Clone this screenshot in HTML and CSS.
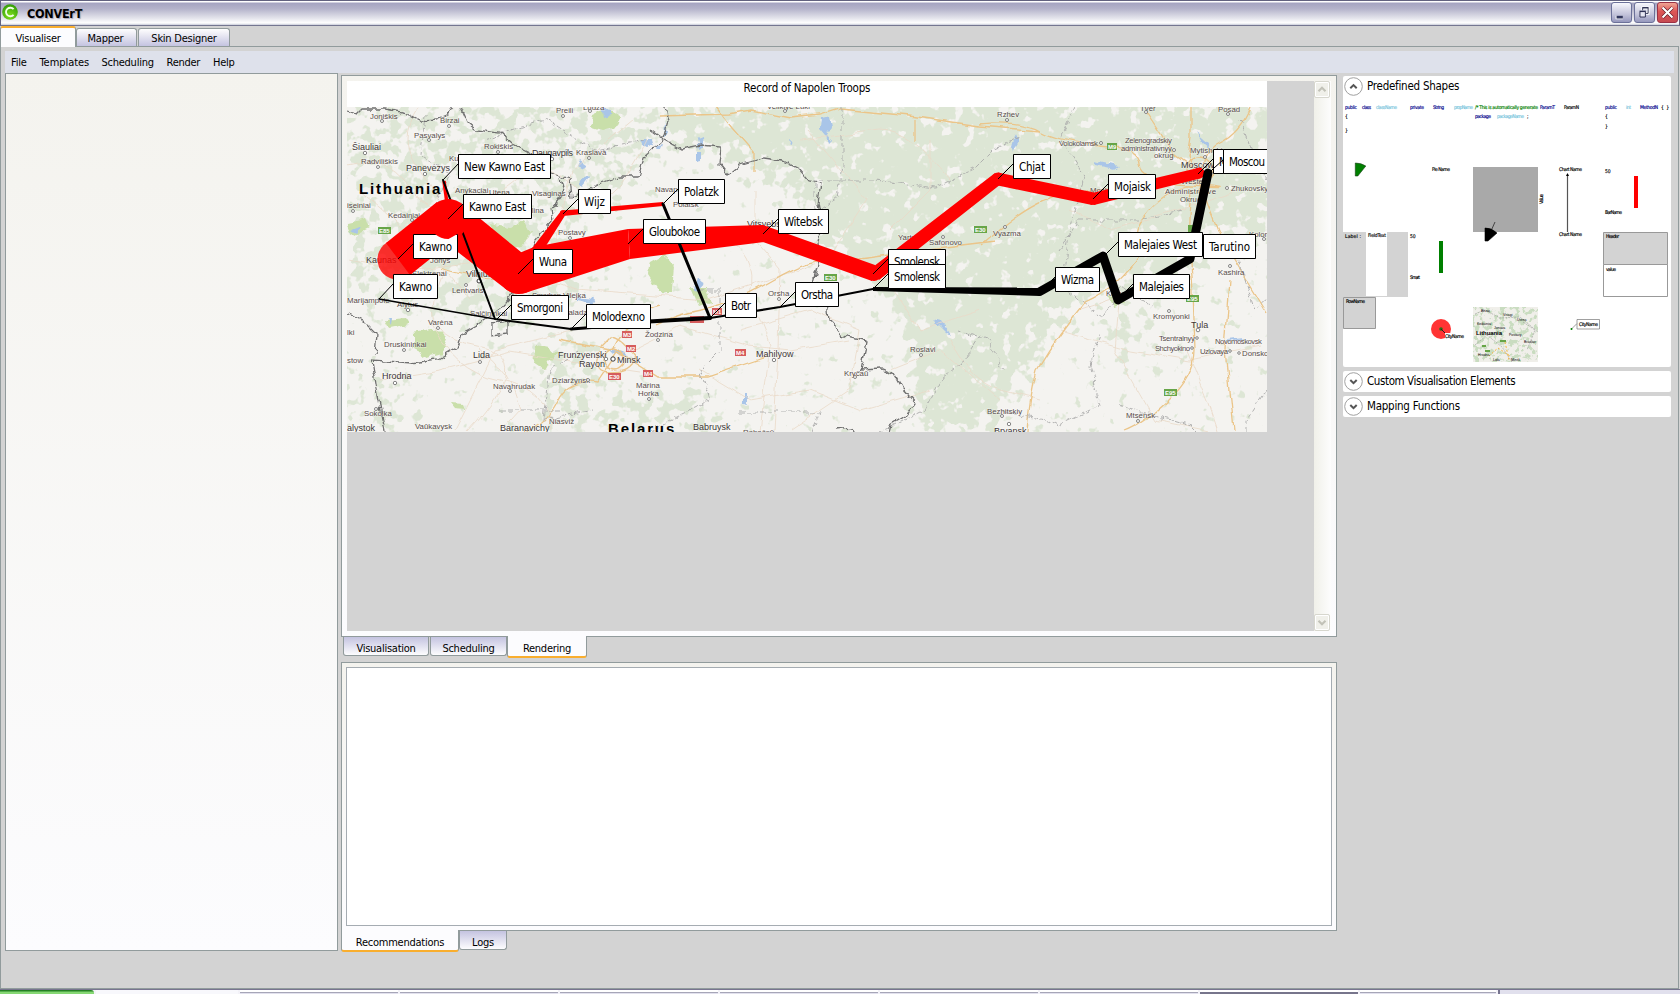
FILE: index.html
```
<!DOCTYPE html>
<html lang="en">
<head>
<meta charset="utf-8">
<title>CONVErT</title>
<link rel="stylesheet" href="styles.css">
</head>
<body>
<div class="window">
  <header class="titlebar">
    <svg class="app-icon" width="16" height="16" viewBox="0 0 16 16"><defs><radialGradient id="orb" cx=".5" cy=".75" r=".8"><stop offset="0" stop-color="#7fe01c"/><stop offset="1" stop-color="#2c9606"/></radialGradient></defs><circle cx="8" cy="8" r="7.8" fill="url(#orb)"/><path d="M11.6 5.2A4.3 4.3 0 1 0 11.6 10.8" fill="none" stroke="#f1ffe6" stroke-width="1.9"/></svg>
    <h1 class="app-title">CONVErT</h1>
    <div class="win-buttons">
      <svg class="win-btn" viewBox="0 0 21 21"><path d="M4 14h8v4H4z" fill="#fff"/><path d="M5 14h7v3H5z" fill="#33385f"/></svg>
      <svg class="win-btn" viewBox="0 0 21 21"><path d="M8.5 8V5.5h6v6H12" fill="none" stroke="#fff" stroke-width="3"/><path d="M8.5 8V5.5h6v6H12M8 5h7" fill="none" stroke="#22264a"/><path d="M5.500 9.500h6v6h-6zM5 9h7" fill="#e8e8f4" stroke="#22264a"/></svg>
      <svg class="win-btn win-close" viewBox="0 0 21 21"><path d="M5 5l11 11M16 5L5 16" stroke="#5a1620" stroke-width="3.600"/><path d="M5 5l11 11M16 5L5 16" stroke="#fff" stroke-width="2.400"/></svg>
    </div>
  </header>
  <nav class="main-tabs">
    <span class="tab active tab-vis">Visualiser</span><span class="tab tab-map">Mapper</span><span class="tab tab-skin">Skin Designer</span>
  </nav>
  <main class="frame">
    <nav class="menu"><span class="m-file">File</span><span class="m-temp">Templates</span><span class="m-sched">Scheduling</span><span class="m-rend">Render</span><span>Help</span></nav>
    <div class="columns">
      <aside class="left-panel"></aside>
      <section class="center">
        <div class="viewer">
          <div class="canvas">
            <svg class="map" width="920" height="351" viewBox="347 81 920 351">
              <defs>
                <filter id="woods" filterUnits="userSpaceOnUse" x="347" y="107" width="920" height="325" color-interpolation-filters="sRGB">
                  <feGaussianBlur in="SourceAlpha" stdDeviation="11" result="density"/>
                  <feTurbulence type="fractalNoise" baseFrequency=".085" numOctaves="3" seed="7" result="noise"/>
                  <feComposite in="noise" in2="density" operator="arithmetic" k1="0" k2="1" k3=".38" k4="-.32" result="sum"/>
                  <feComponentTransfer in="sum" result="mask"><feFuncA type="linear" slope="12" intercept="-4.300"/></feComponentTransfer>
                  <feFlood flood-color="#dde6d5"/><feComposite in2="mask" operator="in"/>
                </filter>
                <filter id="rough" filterUnits="userSpaceOnUse" x="340" y="100" width="940" height="340">
                  <feTurbulence type="fractalNoise" baseFrequency=".11" numOctaves="2" seed="3"/>
                  <feDisplacementMap in="SourceGraphic" scale="8" xChannelSelector="R" yChannelSelector="G"/>
                </filter>
                <filter id="soft" filterUnits="userSpaceOnUse" x="340" y="100" width="940" height="340">
                  <feTurbulence type="fractalNoise" baseFrequency=".05" numOctaves="2" seed="9"/>
                  <feDisplacementMap in="SourceGraphic" scale="7" xChannelSelector="R" yChannelSelector="G"/>
                </filter>
                <clipPath id="area"><path d="M347 107h920v325H347z"/></clipPath>
              </defs>
              <path d="M347 81h920v26H347z" fill="#fff"/>
              <text class="caption" x="743.500" y="92" textLength="127">Record of Napolen Troops</text>
              <g clip-path="url(#area)">
                <path d="M347 107h920v325H347z" fill="#f4f3f0"/>
                <g filter="url(#woods)">
                  <path fill="#000" d="M660 100H1270V215L1200 250 1160 290 1110 280 1050 330 985 432H920L905 330 860 260 815 240 800 190 730 160 660 130z"/>
                  <path fill="#000" fill-opacity=".55" d="M347 100H660V160L560 240 600 290 550 330 480 330 350 300zM347 380h60v52h-60zM540 340h60v92h-60zM1110 300h40v60h-40zM580 390h140v42H580zM1230 160h40v100h-40z"/>
                </g>
                <g fill="#c9dfaa" filter="url(#rough)">
                  <path d="M592 115l14-6 14 8-4 10-14 4-12-4zM490 224l20 4 12-8 8 14-10 14-24-6zM536 345l14 3 7 6-8 8-4 8-12-8zM650 262l14-8 10 12-2 26-12 0-12-18zM690 288l16 0 4 14-12 4zM412 333l26-4 10 10-6 14-14 4-16-8zM385 320l20-2 4 6-20 4zM450 403l14 1 2 5-12-1zM1108 296l14-3 3 10-12 4zM348 222l18-4 4 10-16 8z"/>
                </g>
                <g fill="#a9c5e8" filter="url(#rough)">
                  <path d="M601 108l10 2 0 6-8 2zM641 139l10 0 2 6-8 3zM580 161l6 4-3 5-6-3zM697 138l5-2 1 12-4 2zM821 118l10-2 2 10-8 10-5-6zM825 130l6 10-3 3zM665 122l3 8-4 8zM655 146l8-2-2 6zM578 182l10-7 2 2-7 9zM697 152l4 0 0 8-4 1zM575 297l20 2-3 5-16-3zM608 346l16 6 4 6-14-6zM698 278l6 4-5 10-4-3zM934 320l8 2 8 12-4-2zM744 394l2 0 0 12-2-1zM1093 160l26 6-4 3-20-4zM1196 132l12 10 3 8-9-8zM1016 134l3 8-6 10-1-4zM352 230l10-4-5 7zM388 318l4 0-1 6zM566 150l4 3-3 4zM788 140l5 1-2 4zM1226 340l18-2-3 3-15 2z"/>
                </g>
                <g class="minor" filter="url(#soft)">
                  <path d="M347 165q40-10 60 20t50 25 60-30 60 10 70-50M418 107q-20 30 0 60t30 50-10 70 40 60-10 85M347 260l60 10 90-10 80 30 130 10 120-40 40-60-60-70M430 320q20 50 70 60t50 50M380 380l60-10 70-18 60 10 70 10M480 350q30 20 40 60l-20 22M720 235q40 20 30 60l20 50-10 87M740 330l70-20 50 20-10 60-60 40M755 190v50l25 30-2 80-4 82M850 340l-60 10-40-4-70-20-60 30M700 370l50 30 60-10 50 20 70-20M950 340q20 40 50 50l40 10M880 270l40 60 60-20M1120 290l-5 60 40 70 60 12M1060 330l70 20 60 10 70-15M1188 350l20 50 10 30M1190 300l-50-10-60 20M950 180q-40-50-70-50l-80 10M930 140v50l-40 40M1240 190l-60 20-70 20-40-20M890 370l50-20 60 50M455 430l40-80 80-20M360 190l70 60 40 50M553 250l20-80 60-50"/>
                </g>
                <g class="road" filter="url(#soft)">
                  <path d="M660 116l70-2 20-4 40 8 30-3 20-6 70 7 70 10 60 5M915 119v22M717 107l15 20 22 25v20M980 124q40-4 60 7t60 14 40 20 50 20 20 0M1145 110l30 45 20 15M1191 107l0 30-3 20 12 25M1250 107q-10 25-30 35t-15 40l-8 10M1200 185l20 50 18 30 29 48M1230 280l-5 70 8 80M1190 185q-30 10-46 32t1 30q-25 40-60 55-25 30-48 68-8 30-10 62M1192 190q-5 50 0 100l2 60q0 25-26 50t-45 32M980 246q50-45 80-50l100-15M835 262q40-5 60-8l100-12M655 325q25-12 50-16t70-30 60-15M525 432q20-5 32-30t40-20l20-30 40 25 50 0q30-10 60-20M600 352q-10 20 10 20t25-15q-15-20-25-20l-10 10M440 268q30 10 70 12M559 340l50 10M1195 255q10-60 5-80M613 350q20-40 46-45"/>
                  <circle cx="1199" cy="170" r="13"/><circle cx="614" cy="359" r="10"/>
                </g>
                <g class="province" filter="url(#rough)">
                  <path d="M425 115l-4 40 30 20-20 40 30 20M485 140l60-20 50 30 50-10M842 107v60l-5 30-20 15M815 210l0-30 60 0 60 8 40-20 20-20 25-10M1075 107l-15 30 25 40-15 50-8 60 40 30 20-30 30 20M1060 250l20-30 60 0 40-10M1240 120l15 40 12 20M1230 240l15 40 10 30 12-10M1267 390l-20 30 0 12M700 290l20 0 0 60-20 20 10 30-60 30M980 335l-15 25-25 20-15 30-60 30M958 330l30 10 15 30M580 350l-30 20-6 50 50-10M500 410l60 0M1100 335l-10 30 10 40-40 20-60-15M1120 405l70 20 10 10M740 412l80 0-8 20"/>
                </g>
                <g class="border" filter="url(#rough)">
                  <path d="M347 110l10 3 4-4 25 0 20 4 15 8 15-1 10-4 6-9M461 107l7 16 8 7 24 3 12 11 20 10 18 19 20 6 2 18 24-12 22-8 20 0 6-20 18-16 6-20-4-20 4-6M650 130l14 10 17 9 20-4 20 2-2 18 8 10 12-10 24-7 20 3 16 8 10 12 12 2-3 20 4 20-4 20 2 18-6 20 12 14M560 178l4 14-13 18 2 10-17 20-5 16-20 12 2 26-12 14-10 8-14 10-15 8-4 13-20 12-26 4-40-3 5 30 8 40 6 14 4 18M347 312l16 8 14 14-2 20M827 300l2 20 14 16 24 6-6 28 20-1 14 6 8 14 12 14-8 12-16 10-3 12M836 430l15-2 10 5"/>
                  <path d="M493 322l14-2 0 14-14 2z"/>
                </g>
                <g class="towns">
                  <text x="370" y="119">Joniškis</text><text x="440" y="123">Birzai</text><text x="414" y="138">Pasvalys</text><text class="city" x="352" y="150">Šiauliai</text><text x="361" y="164">Radviliškis</text><text class="city" x="406" y="171">Panevezys</text><text x="484" y="149">Rokiškis</text><text class="city" x="532" y="156" textLength="41">Daugavpils</text><text x="576" y="155">Kraslava</text><text x="556" y="113">Preili</text><text x="583" y="110">Ludza</text><text x="449" y="161">Kupiškis</text><text x="455" y="193">Anykaciai</text><text x="489" y="195">Utena</text><text x="532" y="196">Visaginas</text><text x="347" y="208">iseiniai</text><text x="388" y="218">Kedainiai</text><text x="558" y="235">Postavy</text><text x="655" y="192">Navapolatsk</text><text x="530" y="213">ilina</text>
                  <text class="city" x="366" y="263">Kaunas</text><text class="city" x="466" y="277">Vilnius</text><text x="412" y="276">Elektrenai</text><text x="430" y="263">Jonys</text><text x="452" y="293">Lentvaris</text><text x="347" y="303">Marijampole</text><text x="397" y="307">Alytus</text><text x="470" y="316">Salčininkai</text><text x="532" y="298" textLength="29">Smarhon</text><text x="563" y="298">Vilejka</text><text x="562" y="315">Maladzyechna</text><text x="428" y="325">Varėna</text><text x="384" y="347">Druskininkai</text><text x="347" y="335">lki</text><text x="347" y="363">stow</text><text class="city" x="473" y="358">Lida</text><text class="city" x="382" y="379">Hrodna</text><text x="493" y="389">Navahrudak</text><text x="364" y="416">Sokolka</text><text class="city" x="347" y="431">alystok</text><text x="415" y="429">Vaŭkavysk</text><text class="city" x="500" y="431">Baranavichy</text><text x="549" y="424">Niasviž</text><text class="city" x="558" y="358">Frunzyenski</text><text class="city" x="579" y="367">Rayon</text><text class="city" x="617" y="363">Minsk</text><text x="552" y="383">Dziaržynsk</text><text x="636" y="388">Marina</text><text x="638" y="396">Horka</text><text x="645" y="337">Žodzina</text>
                  <text x="767" y="109">Velikiye Luki</text><text x="673" y="207">Polatsk</text><text class="city" x="747" y="227">Vitsyebsk</text><text x="929" y="245">Safonovo</text><text x="898" y="240">Yartsevo</text><text x="768" y="296">Orsha</text><text class="city" x="756" y="357">Mahilyow</text><text x="844" y="376">Kryčaŭ</text><text x="910" y="352">Roslavl</text><text class="city" x="693" y="430">Babruysk</text><text x="743" y="435">Rahačoŭ</text>
                  <text x="997" y="117">Rzhev</text><text x="1140" y="111">Tver</text><text x="1218" y="112">Posad</text><text x="1059" y="146" textLength="39">Volokolamsk</text><text x="1125" y="143" textLength="47">Zelenogradskiy</text><text x="1121" y="151" textLength="51">administrativnyy</text><text x="1154" y="158">okrug</text><text x="1190" y="153">Mytishchi</text><text class="city" x="1181" y="168">Moscow</text><text x="1181" y="184">Western</text><text x="1165" y="194" textLength="51">Administrative</text><text x="1180" y="202">Okrug</text><text x="1231" y="191">Zhukovsky</text><text x="1090" y="193">Mozhaysk</text><text x="993" y="236">Vyazma</text><text x="1249" y="237">Kolomna</text><text x="1106" y="296">Kaluga</text>
                  <text x="1218" y="275">Kashira</text><text x="1153" y="319">Kromyonki</text><text class="city" x="1191" y="328">Tula</text><text x="1159" y="341" textLength="36">Tsentralnyy</text><text x="1155" y="351" textLength="35">Shchyokino</text><text x="1215" y="344" textLength="47">Novomoskovsk</text><text x="1200" y="354" textLength="28">Uzlovaya</text><text x="1242" y="356">Donskoy</text><text x="1126" y="418">Mtsensk</text><text x="987" y="414">Bezhitskiy</text><text class="city" x="994" y="434">Bryansk</text>
                </g>
                <g fill="#fff" stroke="#777" stroke-width=".9">
                  <circle cx="382" cy="121" r="1.500"/><circle cx="449" cy="126" r="1.500"/><circle cx="429" cy="140" r="1.500"/><circle cx="365" cy="153" r="1.700"/><circle cx="425" cy="174" r="1.700"/><circle cx="378" cy="167" r="1.500"/><circle cx="563" cy="116" r="1.500"/><circle cx="590" cy="111" r="1.500"/><circle cx="498" cy="152" r="1.500"/><circle cx="552" cy="159" r="1.700"/><circle cx="589" cy="158" r="1.500"/><circle cx="353" cy="211" r="1.500"/><circle cx="412" cy="220" r="1.500"/><circle cx="570" cy="238" r="1.500"/><circle cx="479" cy="281" r="2" stroke="#222"/><circle cx="466" cy="285" r="1.500"/><circle cx="408" cy="310" r="1.700"/><circle cx="438" cy="328" r="1.500"/><circle cx="404" cy="350" r="1.500"/><circle cx="480" cy="362" r="1.500"/><circle cx="395" cy="383" r="1.700"/><circle cx="510" cy="391" r="1.500"/><circle cx="376" cy="409" r="1.500"/><circle cx="606" cy="359" r="1.700"/><circle cx="613" cy="359" r="2.200" stroke="#222"/><circle cx="588" cy="380" r="1.500"/><circle cx="649" cy="399" r="1.500"/><circle cx="658" cy="340" r="1.500"/><circle cx="785" cy="111" r="1.500"/><circle cx="779" cy="299" r="1.500"/><circle cx="774" cy="360" r="1.700"/><circle cx="855" cy="377" r="1.500"/><circle cx="921" cy="355" r="1.500"/><circle cx="943" cy="237" r="1.500"/><circle cx="1007" cy="120" r="1.500"/><circle cx="1146" cy="112" r="1.500"/><circle cx="1228" cy="114" r="1.500"/><circle cx="1101" cy="143" r="1.500"/><circle cx="1174" cy="150" r="1.500"/><circle cx="1205" cy="157" r="1.500"/><circle cx="1227" cy="188" r="1.500"/><circle cx="1005" cy="227" r="1.500"/><circle cx="1264" cy="239" r="1.500"/><circle cx="1230" cy="266" r="1.500"/><circle cx="1169" cy="311" r="1.500"/><circle cx="1198" cy="330" r="1.800"/><circle cx="1197" cy="338" r="1.300"/><circle cx="1192" cy="348" r="1.300"/><circle cx="1230" cy="351" r="1.300"/><circle cx="1239" cy="353" r="1.300"/><circle cx="1138" cy="421" r="1.500"/><circle cx="1009" cy="424" r="1.700"/><circle cx="1002" cy="416" r="1.500"/>
                </g>
                <g class="country"><text x="359" y="193.500" textLength="81">Lithuania</text><text x="608" y="433.500" textLength="66">Belarus</text></g>
                <g fill="#67a548"><path d="M378 227h13v7h-13zM824 274h13v7h-13zM974 226h13v7h-13zM1107 143h10v7h-10zM1186 295h13v7h-13zM1164 389h13v7h-13zM1188 225h8v7h-8z"/></g>
                <g fill="#d65c5c"><path d="M622 331h10v7h-10zM626 345h10v7h-10zM643 370h10v7h-10zM608 373h13v7h-13zM735 349h11v7h-11zM712 308h10v7h-10zM690 316h14v7h-14z"/></g>
                <g class="shields"><text x="379" y="233">E85</text><text x="825" y="280">E30</text><text x="975" y="232">E30</text><text x="1108" y="149">M9</text><text x="1187" y="301">E95</text><text x="1165" y="395">E95</text><text x="623" y="337">M3</text><text x="627" y="351">M2</text><text x="644" y="376">M4</text><text x="609" y="379">E30</text><text x="736" y="355">M4</text><text x="713" y="314">M1</text></g>
                <!-- advance -->
                <g fill="#f00">
                  <circle cx="397.500" cy="259.500" r="20" opacity=".8"/>
                  <path d="M386 243L437 202 460 235 410 275z"/>
                  <path d="M461 203L521 252 537 262 519 294 507 290 437 236zM507 258L534 247 628 229 630 259 525 293z"/>
                  <path d="M628 229L763 225 764 242 630 259zM763 225L875 265 872 281 763 242zM869 270L995 173 1001 184 879 280z"/>
                  <path d="M998 172.500L1094 192.500 1092 205 998 185.500zM1092 193L1198 168 1200 178.500 1094 205z"/>
                  <circle cx="519" cy="274" r="20"/><circle cx="874" cy="274" r="7"/><circle cx="998" cy="179" r="6.500"/><circle cx="1093" cy="199" r="6"/><circle cx="1199" cy="173" r="5.500"/>
                  <path d="M515 270L561 211 566 214 527 276zM563 210.500L663 202 663 206 563 216z"/>
                  <circle cx="563" cy="213" r="3"/>
                </g>
                <path d="M444 181l4 30" stroke="#f00" stroke-width="3.500"/>
                <!-- retreat -->
                <g stroke="#000" fill="none" stroke-linecap="round">
                  <path d="M443 180L495 319M495 319L571 329" stroke-width="2"/><path d="M379 299L495 319" stroke-width="1.400"/>
                  <path d="M663 204L710 318" stroke-width="3"/><path d="M571 329L640 324" stroke-width="3"/><path d="M640 322L710 318" stroke-width="4.200"/><path d="M710 318L780 307 873 289" stroke-width="2.200"/>
                </g>
                <path d="M873 287L1040 287.500V296L873 291z"/>
                <path d="M1040 291.500L1103 256 1118 300 1190 259 1208 173" fill="none" stroke="#000" stroke-linecap="round" stroke-width="8.800" stroke-linejoin="round"/>
                <circle cx="448.500" cy="219" r="20" fill="#f00"/>
                <g class="leaders">
                  <path d="M443 180l15-16M448 219l15-15M398 259l15-15M379 299l14-15M563 214l15-15M628 244l15-15M663 204l15-15M763 234l15-15M518 274l15-15M496 320l15-15M571 329l15-15M710 318l15-15M780 307l15-15M873 274l15-15M873 289l15-15M998 179l15-15M1093 199l15-15M1198 174l15-15M1208 174l15-15M1103 257l15-15M1040 292l15-15M1118 299l15-15M1188 259l15-15"/>
                </g>
                <g class="boxes">
                  <path d="M458.500 154.500h92v24h-92zM463.500 194.500h68v24h-68zM413.500 234.500h44v24h-44zM393.500 274.500h44v24h-44zM578.500 189.500h32v24h-32zM643.500 219.500h62v24h-62zM678.500 179.500h46v24h-46zM778.500 209.500h50v24h-50zM533.500 249.500h39v24h-39zM511.500 295.500h57v24h-57zM586.500 304.500h64v24h-64zM725.500 293.500h31v24h-31zM795.500 282.500h43v24h-43zM888.500 249.500h57v24h-57zM1013.500 154.500h37v24h-37zM1108.500 174.500h47v24h-47zM1213.500 149.500h44v24h-44zM1118.500 232.500h84v24h-84zM1203.500 234.500h52v24h-52zM1055.500 267.500h44v24h-44zM1133.500 274.500h56v24h-56z"/>
                </g>
                <path d="M448.500 239A20 20 0 0 1 435 234h22.500z" fill="#f00"/>
                <g class="labels">
                  <text x="464" y="171" textLength="81">New Kawno East</text><text x="469" y="211" textLength="57">Kawno East</text><text x="419" y="251" textLength="33">Kawno</text><text x="399" y="291" textLength="33">Kawno</text><text x="584" y="206" textLength="21">Wijz</text><text x="649" y="236" textLength="51">Gloubokoe</text><text x="684" y="196" textLength="35">Polatzk</text><text x="784" y="226" textLength="39">Witebsk</text><text x="539" y="266" textLength="28">Wuna</text><text x="517" y="312" textLength="46">Smorgoni</text><text x="592" y="321" textLength="53">Molodexno</text><text x="731" y="310" textLength="20">Botr</text><text x="801" y="299" textLength="32">Orstha</text><text x="894" y="266" textLength="46">Smolensk</text><text x="1019" y="171" textLength="26">Chjat</text><text x="1114" y="191" textLength="37">Mojaisk</text><text x="1219" y="166" textLength="36">Moscou</text><text x="1124" y="249" textLength="73">Malejaies West</text><text x="1209" y="251" textLength="41">Tarutino</text><text x="1061" y="284" textLength="33">Wizma</text><text x="1139" y="291" textLength="45">Malejaies</text>
                </g>
                <g class="boxes"><path d="M888.500 264.500h57v24h-57zM1223.500 149.500h48v24h-48z"/></g>
                <path class="leaders" d="M1214 168l9-8"/>
                <g class="labels"><text x="894" y="281" textLength="46">Smolensk</text><text x="1229" y="166" textLength="36">Moscou</text></g>
              </g>
            </svg>
          </div>
          <div class="scrollbar">
            <svg class="sb-btn" viewBox="0 0 16 16"><path d="M4 10l4-4 4 4" /></svg>
            <svg class="sb-btn" viewBox="0 0 16 16"><path d="M4 6l4 4 4-4" /></svg>
          </div>
        </div>
        <nav class="bottom-tabs view-tabs"><span class="btab b-vis">Visualisation</span><span class="btab b-sch">Scheduling</span><span class="btab active b-ren">Rendering</span></nav>
        <div class="recommend"><div class="textbox"></div></div>
        <nav class="bottom-tabs"><span class="btab active b-rec">Recommendations</span><span class="btab b-log">Logs</span></nav>
      </section>
      <aside class="right">
        <section class="expander open">
          <h2 class="exp-head"><svg class="chev" viewBox="0 0 19 19"><circle cx="9.500" cy="9.500" r="8.800"/><path d="M6.300 11.300l3.200-3.200 3.200 3.200"/></svg><span class="w-pre">Predefined Shapes</span></h2>
          <svg class="shapes" width="328" height="267" viewBox="1343 100 328 267">
            <defs>
              <filter id="mini" x="0" y="0" width="1" height="1" color-interpolation-filters="sRGB"><feTurbulence type="fractalNoise" baseFrequency=".2" numOctaves="3" seed="5"/><feComponentTransfer><feFuncA type="linear" slope="9" intercept="-4.500"/></feComponentTransfer><feComposite in2="SourceGraphic" operator="in" result="m"/><feFlood flood-color="#c9dcc0"/><feComposite in2="m" operator="in" result="g"/><feMerge><feMergeNode in="SourceGraphic"/><feMergeNode in="g"/></feMerge></filter>
            </defs>
            <g class="code">
              <g fill="#00008b" stroke="#00008b"><text x="1345" y="108.500" textLength="12">public</text><text x="1362" y="108.500" textLength="9">class</text><text x="1410" y="108.500" textLength="14">private</text><text x="1433" y="108.500" textLength="11">String</text><text x="1540" y="108.500" textLength="15">ParamT</text><text x="1605" y="108.500" textLength="12">public</text><text x="1640" y="108.500" textLength="18">MethodN</text><text x="1475" y="117.500" textLength="16">package</text></g>
              <g fill="#5fb8d6" stroke="#8fd0e4"><text x="1376" y="108.500" textLength="21">className</text><text x="1454" y="108.500" textLength="19">propName</text><text x="1626" y="108.500" textLength="5">int</text><text x="1497" y="117.500" textLength="27">packageName</text></g>
              <text fill="green" stroke="green" x="1475" y="108.500" textLength="63">/* This is automatically generate</text>
              <text x="1564" y="108.500" textLength="15">ParamN</text><text x="1661" y="108.500" textLength="8">{ }</text><text x="1527" y="117.500">;</text><text x="1345" y="117.500">{</text><text x="1345" y="131.500">}</text><text x="1605" y="117.500">{</text><text x="1605" y="127.500">}</text>
            </g>
            <path d="M1355.300 163q6 0 10.500 3l-8 10h-2.500z" fill="green" stroke="#143c14" stroke-width=".6"/>
            <path d="M1473 167h65v65h-65z" fill="#a9a9a9"/><path d="M1485 228q6-.5 12 5l-9 8h-3zM1491 231l4-9" stroke="#000" stroke-width=".6"/>
            <path d="M1567.500 174v58" stroke="#555" stroke-width="1.200"/><path d="M1566 176l1.500-3 1.500 3z"/>
            <path d="M1634 176h4v32h-4z" fill="red"/>
            <path d="M1343 232h65v65h-65z" fill="#d3d3d3"/><path d="M1366 232h21v64h-21z" fill="#fff"/>
            <path d="M1439 241h4v32h-4z" fill="green"/>
            <path d="M1603.500 232.500h64v32h-64zM1343.500 297.500h32v31h-32z" fill="#d3d3d3" stroke="#999"/><path d="M1603.500 264.500h64v32h-64z" fill="#fff" stroke="#999"/>
            <circle cx="1441" cy="329" r="10" fill="#ff3434"/><circle cx="1441" cy="329" r="1.800" fill="#286e14"/><path d="M1441 329l4 4" stroke="#222"/><path d="M1445 333h18v7h-18z" fill="#fff"/>
            <path d="M1473 307h65v55h-65z" fill="#f0efea" filter="url(#mini)"/>
            <path d="M1475 314l10-4 15 8 20-1 18 15M1475 345l12-10 15 12 10 15M1523 322l12 8-8 20" fill="none" stroke="#999" stroke-width=".6" stroke-dasharray="2 1"/>
            <path d="M1500 340h6v2h-6zM1482 345h4v2h-4zM1485 350h5v2h-5z" fill="#67a548"/><path d="M1489 356l9-8 12 8M1505 342l4 18" fill="none" stroke="#f5b63e" stroke-dasharray="2 2"/>
            <path d="M1571.500 329l5.500-5.500v-4h22.500v9.500H1577v-5.500" fill="#fff" stroke="#777" stroke-width=".7"/><circle cx="1571.500" cy="329" r="1" fill="green"/>
            <g class="code">
              <text x="1432" y="171" textLength="18">Pie Name</text><text x="1559" y="171" textLength="23">Chart Name</text><text x="1559" y="236" textLength="23">Chart Name</text><text x="1605" y="173">50</text><text x="1605" y="214" textLength="17">BarName</text><text x="1345" y="238" textLength="16">Label  :</text><text x="1368" y="237" textLength="18">FieldText</text><text x="1410" y="238">50</text><text x="1410" y="279" textLength="10">Smart</text><text x="1606" y="238" textLength="13">Header</text><text x="1606" y="271" textLength="10">value</text><text x="1346" y="303" textLength="19">RowName</text><text x="1445" y="338" textLength="19">CityName</text><text x="1579" y="326" textLength="19">CityName</text><text transform="translate(1543 204) rotate(-90)" textLength="10">Value</text>
            </g>
            <g class="mini-towns">
              <text x="1481" y="312">Birzai</text><text x="1517" y="321">Utena</text><text x="1477" y="325">Kedainiai</text><text x="1494" y="329">Jonava</text><text x="1503" y="316">Visagi</text><text x="1509" y="336">Postavy</text><text x="1478" y="356">Hrodna</text><text x="1493" y="361">Lida</text><text x="1511" y="361">Minsk</text><text x="1524" y="343">Braslav</text>
              <text x="1476" y="335" class="mini-country" textLength="26">Lithuania</text>
            </g>
          </svg>
        </section>
        <section class="expander"><h2 class="exp-head"><svg class="chev" viewBox="0 0 19 19"><circle cx="9.500" cy="9.500" r="8.800"/><path d="M6.300 8l3.200 3.200L12.700 8"/></svg><span class="w-cus">Custom Visualisation Elements</span></h2></section>
        <section class="expander"><h2 class="exp-head"><svg class="chev" viewBox="0 0 19 19"><circle cx="9.500" cy="9.500" r="8.800"/><path d="M6.300 8l3.200 3.200L12.700 8"/></svg><span class="w-mapf">Mapping Functions</span></h2></section>
      </aside>
    </div>
  </main>
  <footer class="taskbar"><i class="start"></i><i class="quick"></i><i class="task"></i><i class="task"></i><i class="task"></i><i class="task"></i><i class="task"></i><i class="task"></i><i class="task pressed"></i><i class="task last"></i><i class="tray"></i></footer>
</div>
</body>
</html>
```
FILE: styles.css
```
* { box-sizing: border-box; }
body { margin: 0; overflow: hidden; background: #d3d3d3; color: #000; font: 11px/14px "DejaVu Sans Condensed", "DejaVu Sans", sans-serif; font-stretch: condensed; letter-spacing: -.25px; }
.window { width: 1680px; height: 994px; display: flex; flex-direction: column; }
.titlebar { height: 26px; flex: none; display: flex; align-items: center; padding: 0 1px 1px; border: 1px solid #62627f; border-bottom-color: #747690; background: linear-gradient(#fff 0 1px, #a5a4c1 2px, #b5b4cb 8px, #e3e3eb 17px, #fff 22px, #c8cad8 24px); }
.app-icon { margin-top: -1px; }
.app-title { margin: 2px 0 0 9px; font: bold 12.500px/16px "DejaVu Sans Condensed", sans-serif; font-stretch: condensed; letter-spacing: -.25px; text-shadow: 1px 1px 1px #a5a5b8; }
.win-buttons { margin-left: auto; display: flex; gap: 2px; }
.win-btn { width: 21px; height: 21px; border: 1px solid #6c7199; border-radius: 3px; background: linear-gradient(#f7f7fc, #c3c3da 60%, #9698bd); }
.win-close { border-color: #9b3144; background: linear-gradient(#f0a595, #dd5555 45%, #c64a52); }
.main-tabs { height: 20px; flex: none; display: flex; align-items: flex-end; }
.tab { height: 18px; border: 1px solid #919b9c; border-bottom: 0; border-radius: 3px 3px 0 0; background: linear-gradient(#fefefe, #c4c3e0); text-align: center; line-height: 20px; }
.tab.active { height: 21px; border-top: 2px solid #f9ae2e; background: #fcfcfe; margin-bottom: -1px; position: relative; line-height: 21px; }
.tab-vis { width: 76px; } .tab-map { width: 61px; padding-right: 2px; } .tab-skin { width: 92px; margin-left: 1px; }
.frame { height: 943px; flex: none; width: 1679px; border: 1px solid #919b9c; padding: 4px; display: flex; flex-direction: column; }
.menu { height: 22px; flex: none; background: #dee1eb; display: flex; padding-left: 6px; line-height: 23px; }
.menu span { white-space: nowrap; }
.m-file { width: 28.500px; } .m-temp { width: 62px; letter-spacing: -.05px; } .m-sched { width: 65px; } .m-rend { width: 46.500px; }
.columns { flex: 1; display: flex; align-items: flex-start; }
.left-panel { width: 333px; height: 878px; border: 1px solid #919b9c; background: linear-gradient(#f4f3ee, #fcfcfe); }
.center { width: 996px; margin: 2px 0 0 3px; display: flex; flex-direction: column; }
.viewer { height: 562px; border: 1px solid #919b9c; background: linear-gradient(#f4f3ee, #fcfcfe); padding: 5px; display: flex; }
.canvas { width: 967px; height: 550px; background: #d3d3d3; }
.map { display: block; }
.scrollbar { width: 17px; background: linear-gradient(90deg, #f0f0e9, #fdfdfd); display: flex; flex-direction: column; justify-content: space-between; }
.sb-btn { width: 16px; height: 17px; border: 1px solid #d7d7ce; border-radius: 2px; background: #f0f0ea; box-shadow: 0 0 0 1px #fff inset; }
.sb-btn path { fill: none; stroke: #c2c2b8; stroke-width: 2.400; }
.bottom-tabs { display: flex; align-items: flex-start; height: 22px; }
.view-tabs { height: 25px; padding-left: 2px; }
.btab { height: 19px; border: 1px solid #919b9c; border-top: 0; border-radius: 0 0 3px 3px; background: linear-gradient(#c4c3e0, #fdfdfe); text-align: center; line-height: 23px; }
.btab.active { height: 22px; margin-top: -1px; background: #fcfcfe; border-bottom: 2px solid #f9ae2e; position: relative; line-height: 26px; }
.b-vis { width: 86px; margin-right: 1px; } .b-sch { width: 77px; } .b-ren { width: 80px; } .b-rec { width: 118px; } .b-log { width: 48px; }
.recommend { height: 269px; border: 1px solid #919b9c; background: linear-gradient(#f4f3ee, #fcfcfe); padding: 4px; }
.textbox { height: 259px; width: 986px; border: 1px solid #a5acb2; background: #fff; }
.right { width: 328px; margin: 3px 0 0 6px; display: flex; flex-direction: column; gap: 4px; }
.expander { height: 21px; background: #fff; border-radius: 2px; }
.expander.open { height: 291px; }
.exp-head { margin: 0; height: 20px; display: flex; align-items: center; font: inherit; font-size: 11.500px; padding-left: 1px; gap: 4px; white-space: nowrap; }
.w-cus { letter-spacing: -.4px; }
.chev { width: 19px; height: 19px; }
.chev circle { fill: #fff; stroke: #a0a0a0; }
.chev path { fill: none; stroke: #555; stroke-width: 2; }
.shapes { display: block; margin-top: 4px; }
.code { font: 5px "DejaVu Sans Condensed", sans-serif; font-stretch: condensed; letter-spacing: 0; stroke: #000; stroke-width: .15px; }
.mini-towns { font: 3.500px "Liberation Sans", sans-serif; letter-spacing: 0; }
.mini-country { font-weight: bold; font-size: 6px; }
.caption, .labels { font: 11.500px "DejaVu Sans Condensed", sans-serif; font-stretch: condensed; letter-spacing: 0; }
.towns { font: 7.800px "Liberation Sans", sans-serif; fill: #574b48; letter-spacing: 0; paint-order: stroke; stroke: #fff; stroke-width: 1px; stroke-opacity: .5; }
.towns .city { font-size: 9px; fill: #3c3534; }
.country { font: bold 15px "Liberation Sans", sans-serif; }
.shields { font: bold 6px "Liberation Sans", sans-serif; fill: #fff; letter-spacing: 0; }
.minor { fill: none; stroke: #ead9c8; stroke-width: .8; }
.road { fill: none; stroke: #ebc589; stroke-width: 1.300; }
.province { fill: none; stroke: #aaa; stroke-width: .9; stroke-dasharray: 5 2; }
.border { fill: none; stroke: #707070; stroke-width: 1.300; }
.leaders { fill: none; stroke: #000; stroke-width: 1; }
.boxes { fill: #fff; stroke: #000; stroke-width: 1; }
.taskbar { height: 5px; flex: none; display: flex; border-top: 1px solid #77748f; background: #f3f2f8; gap: 2px; }
.start { width: 94px; background: linear-gradient(#248024 0 1px, #86d874 2px); border-radius: 0 3px 0 0; }
.quick { width: 142px; background: #f8f8fc; }
.task { width: 158px; background: linear-gradient(#fff 0 2px, #a7a6b8 2px 3px, #e2e1ee 3px); }
.pressed { background: linear-gradient(#fff 0 2px, #77758c 2px); } .last { width: 136px; }
.tray { flex: 1; border-left: 2px solid #77748f; background: #e1e0ed; }
```
